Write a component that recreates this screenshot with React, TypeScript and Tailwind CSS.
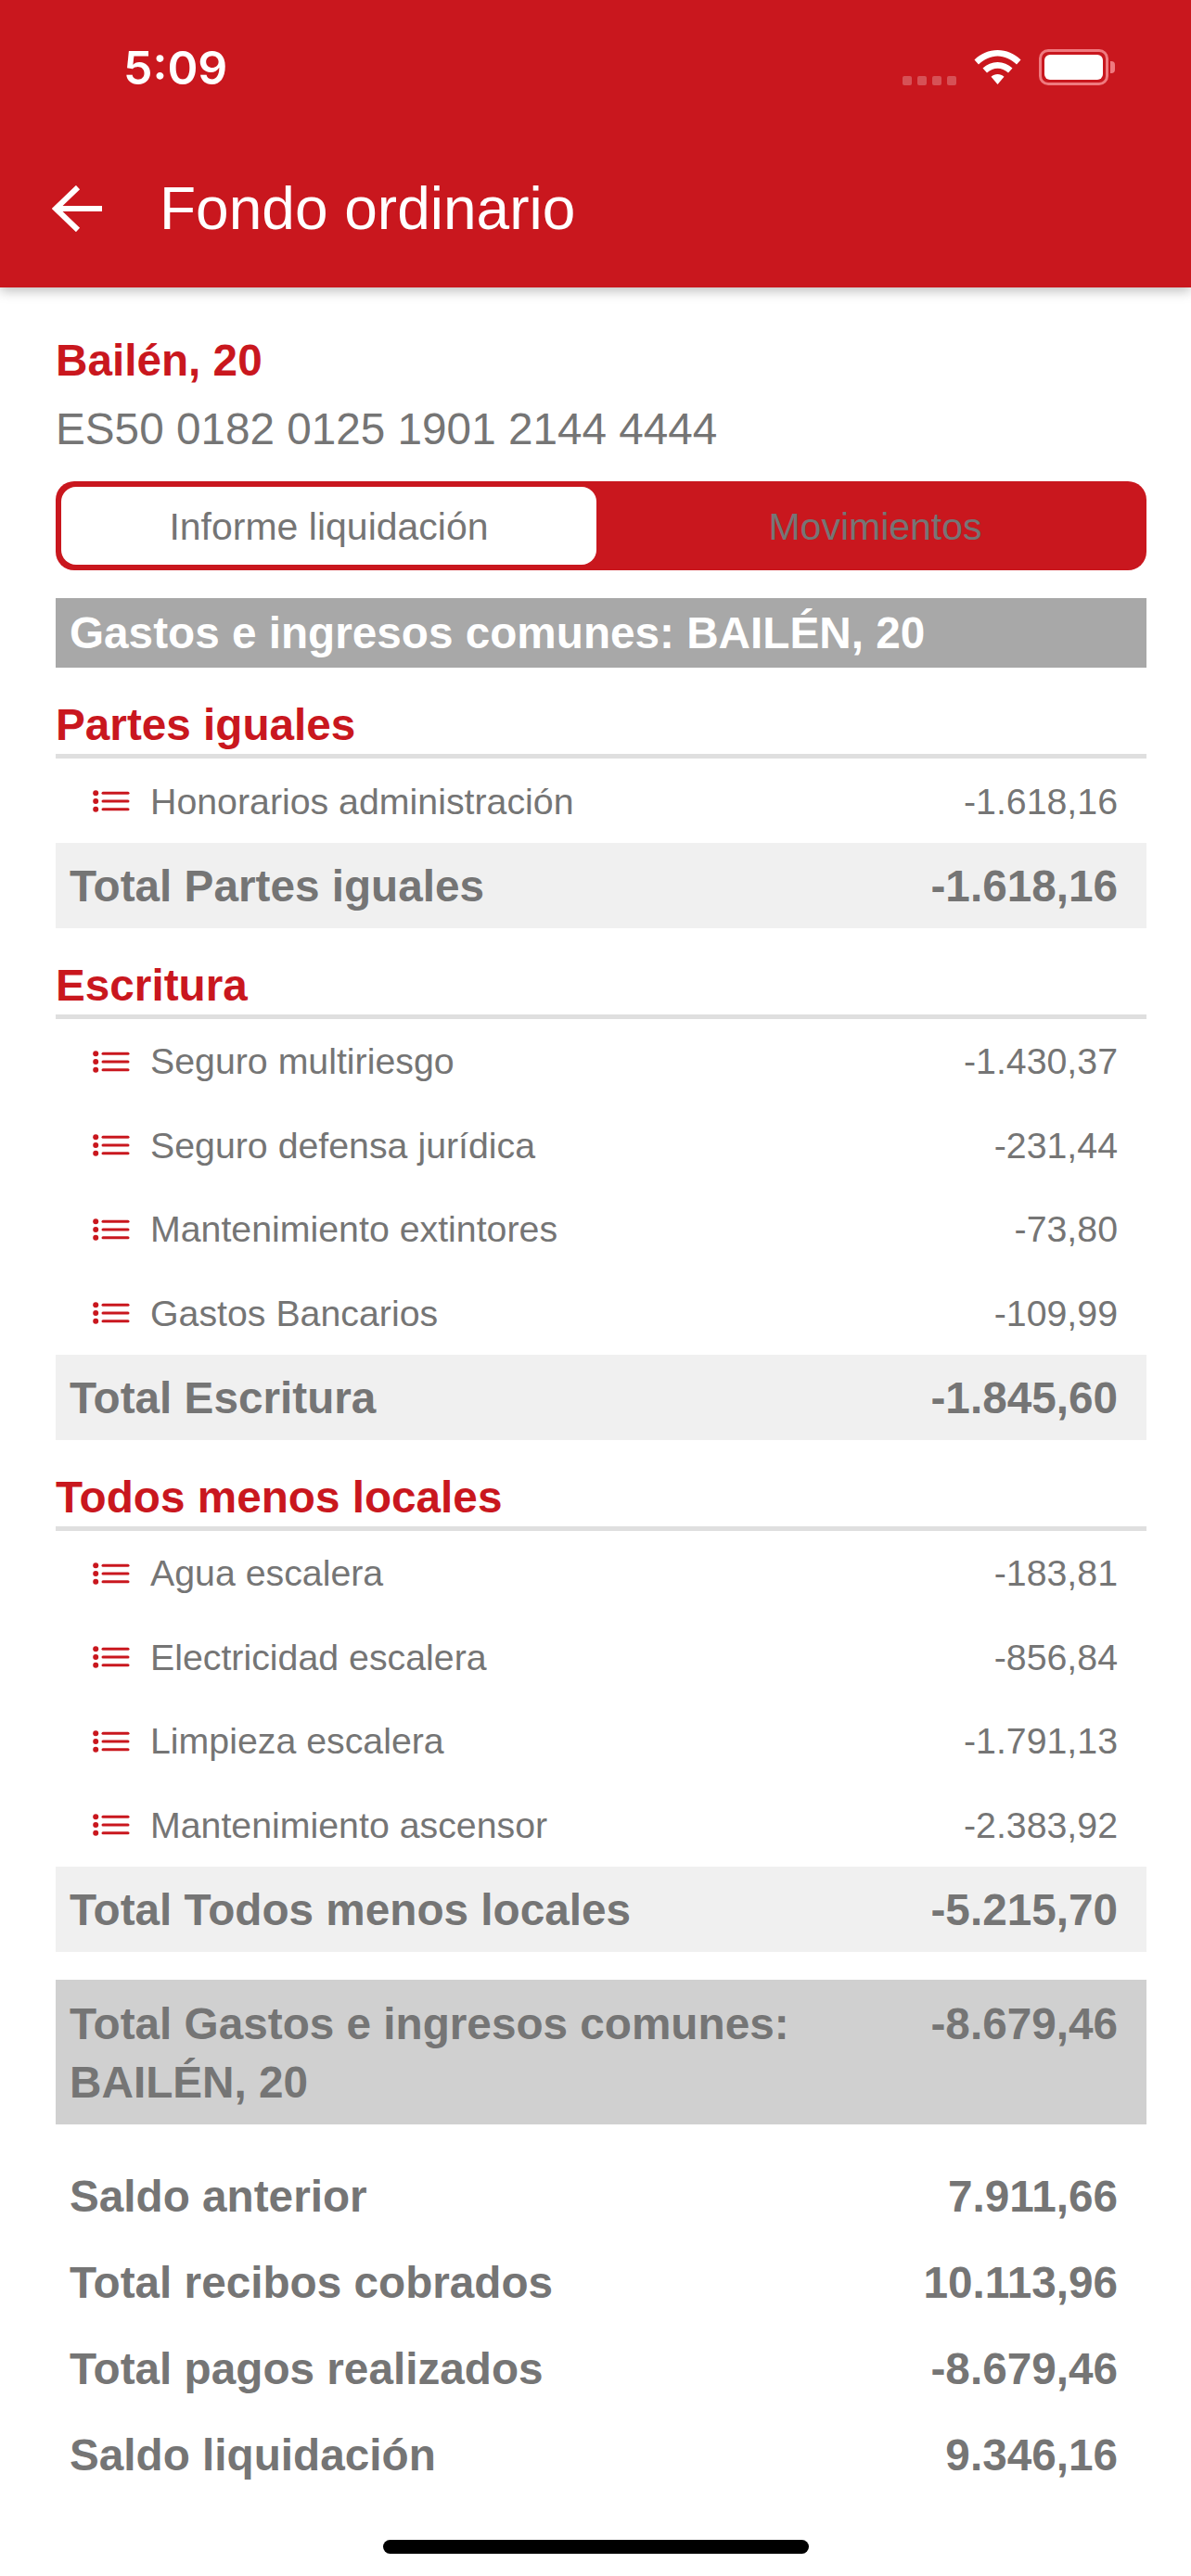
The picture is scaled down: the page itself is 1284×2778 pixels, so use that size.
const font = { fontFamily: '"Liberation Sans", Arial, sans-serif' };

function ListIcon() {
  return (
    <svg width="40" height="24" viewBox="0 0 40 24" className="shrink-0">
      <g fill="#c9171e">
        <circle cx="3.2" cy="3.2" r="3" />
        <circle cx="3.2" cy="12" r="3" />
        <circle cx="3.2" cy="20.8" r="3" />
      </g>
      <g stroke="#c9171e" strokeWidth="3" strokeLinecap="round">
        <path d="M11 3.2H38" />
        <path d="M11 12H38" />
        <path d="M11 20.8H38" />
      </g>
    </svg>
  );
}

function Row({ label, value }: { label: string; value: string }) {
  return (
    <div className="flex h-[90.5px] items-center pl-10 pr-[31px] pt-[2px] text-[39.3px] text-[#757575]">
      <ListIcon />
      <span className="ml-[22px] flex-1">{label}</span>
      <span>{value}</span>
    </div>
  );
}

function Total({ label, value }: { label: string; value: string }) {
  return (
    <div className="flex h-[92px] items-center justify-between bg-[#f0f0f0] pl-[15px] pr-[31px] pt-[2px] text-[47.7px] font-bold text-[#757575]">
      <span>{label}</span>
      <span>{value}</span>
    </div>
  );
}

function Section({ title, rows, total }: { title: string; rows: [string, string][]; total: string }) {
  return (
    <div>
      <div className="box-content flex h-[93px] items-end border-b-[5px] border-[#dfdfdf] text-[47.7px] leading-[58px] font-bold text-[#c9171e]">
        <span className="pb-[2px]">{title}</span>
      </div>
      {rows.map(([l, v]) => (
        <Row key={l} label={l} value={v} />
      ))}
      <Total label={`Total ${title}`} value={total} />
    </div>
  );
}

function Summary({ label, value }: { label: string; value: string }) {
  return (
    <div className="flex h-[93px] items-center justify-between pl-[15px] pr-[31px] pt-[2px] text-[47.7px] font-bold text-[#757575]">
      <span>{label}</span>
      <span>{value}</span>
    </div>
  );
}

export default function App() {
  return (
    <div className="relative h-[2778px] w-[1284px] overflow-hidden bg-white" style={font}>
      <header className="flex h-[310px] flex-col bg-[#c9171e] text-white shadow-[0_4px_12px_rgba(0,0,0,0.25)]">
        <div className="flex h-[200px] items-start justify-between pl-[133px] pr-[82px] pt-[44px]">
          <span className="text-[50px] leading-[58px] font-semibold" style={{ fontFamily: 'Inter, sans-serif' }}>5:09</span>
          <div className="flex items-center gap-[19px] pt-[9px]">
            <div className="flex items-end gap-[6px] self-end pb-0">
              <i className="h-[10px] w-[10px] rounded-[2px] bg-white/25" />
              <i className="h-[10px] w-[10px] rounded-[2px] bg-white/25" />
              <i className="h-[10px] w-[10px] rounded-[2px] bg-white/25" />
              <i className="h-[10px] w-[10px] rounded-[2px] bg-white/25" />
            </div>
            <svg width="51" height="37" viewBox="0 0 50 37">
              <path fill="#fff" d="M25 0C15.500 0 7 3.800 0 10.500L4.500 15.500C10.500 10 17.500 6.500 25 6.500C32.500 6.500 39.500 10 45.500 15.500L50 10.500C43 3.800 34.500 0 25 0Z" />
              <path fill="#fff" d="M25 13C19 13 13.500 15.300 9 19.500L13.500 24.500C17 21.500 21 19.800 25 19.800C29 19.800 33 21.500 36.500 24.500L41 19.500C36.500 15.300 31 13 25 13Z" />
              <path fill="#fff" d="M25 26C22.500 26 20 27 18 28.800L25 37L32 28.800C30 27 27.500 26 25 26Z" />
            </svg>
            <div className="flex items-center">
              <div className="h-[39px] w-[75px] rounded-[10px] border-[3px] border-[#ef7a7f] p-[3px]">
                <div className="h-full w-full rounded-[6px] bg-white" />
              </div>
              <div className="ml-[2px] h-[13px] w-[5px] rounded-r-[4px] bg-[#ef7a7f]" />
            </div>
          </div>
        </div>
        <div className="flex items-center pl-[56px]">
          <svg width="54" height="50" viewBox="0 0 54 50" fill="none" stroke="#fff" strokeWidth="6">
            <path d="M54 25H4" />
            <path d="M28 2L4 25L28 48" />
          </svg>
          <h1 className="ml-[62px] text-[64px] leading-[50px] font-normal">Fondo ordinario</h1>
        </div>
      </header>

      <main className="pl-[60px] pr-[48px]">
        <div className="pt-[51px] text-[47.7px] leading-[56px] font-bold text-[#c9171e]">Bailén, 20</div>
        <div className="mt-[18px] text-[47.7px] leading-[56px] text-[#757575]">ES50 0182 0125 1901 2144 4444</div>
        <div className="mt-[28px] flex h-[96px] rounded-[20px] bg-[#c9171e] p-[6px] text-[41px] text-[#757575]">
          <div className="flex w-[577px] items-center justify-center rounded-[16px] bg-white pt-[3px]">Informe liquidación</div>
          <div className="flex flex-1 items-center justify-center pl-[14px] pt-[3px]">Movimientos</div>
        </div>
        <div className="mt-[30px] flex h-[75px] items-center bg-[#a8a8a8] pl-[15px] text-[47.7px] font-bold text-white">
          Gastos e ingresos comunes: BAILÉN, 20
        </div>

        <Section title="Partes iguales" rows={[["Honorarios administración", "-1.618,16"]]} total="-1.618,16" />
        <Section
          title="Escritura"
          rows={[
            ["Seguro multiriesgo", "-1.430,37"],
            ["Seguro defensa jurídica", "-231,44"],
            ["Mantenimiento extintores", "-73,80"],
            ["Gastos Bancarios", "-109,99"],
          ]}
          total="-1.845,60"
        />
        <Section
          title="Todos menos locales"
          rows={[
            ["Agua escalera", "-183,81"],
            ["Electricidad escalera", "-856,84"],
            ["Limpieza escalera", "-1.791,13"],
            ["Mantenimiento ascensor", "-2.383,92"],
          ]}
          total="-5.215,70"
        />

        <div className="mt-[30px] flex h-[156px] items-start justify-between bg-[#d0d0d0] pl-[15px] pr-[31px] pt-[16px] text-[47.7px] leading-[63px] font-bold text-[#757575]">
          <span className="w-[900px]">Total Gastos e ingresos comunes:<br />BAILÉN, 20</span>
          <span>-8.679,46</span>
        </div>

        <div className="pt-[31px]">
          <Summary label="Saldo anterior" value="7.911,66" />
          <Summary label="Total recibos cobrados" value="10.113,96" />
          <Summary label="Total pagos realizados" value="-8.679,46" />
          <Summary label="Saldo liquidación" value="9.346,16" />
        </div>
      </main>

      <div className="absolute bottom-[24px] left-[413px] h-[15px] w-[459px] rounded-full bg-black" />
    </div>
  );
}
